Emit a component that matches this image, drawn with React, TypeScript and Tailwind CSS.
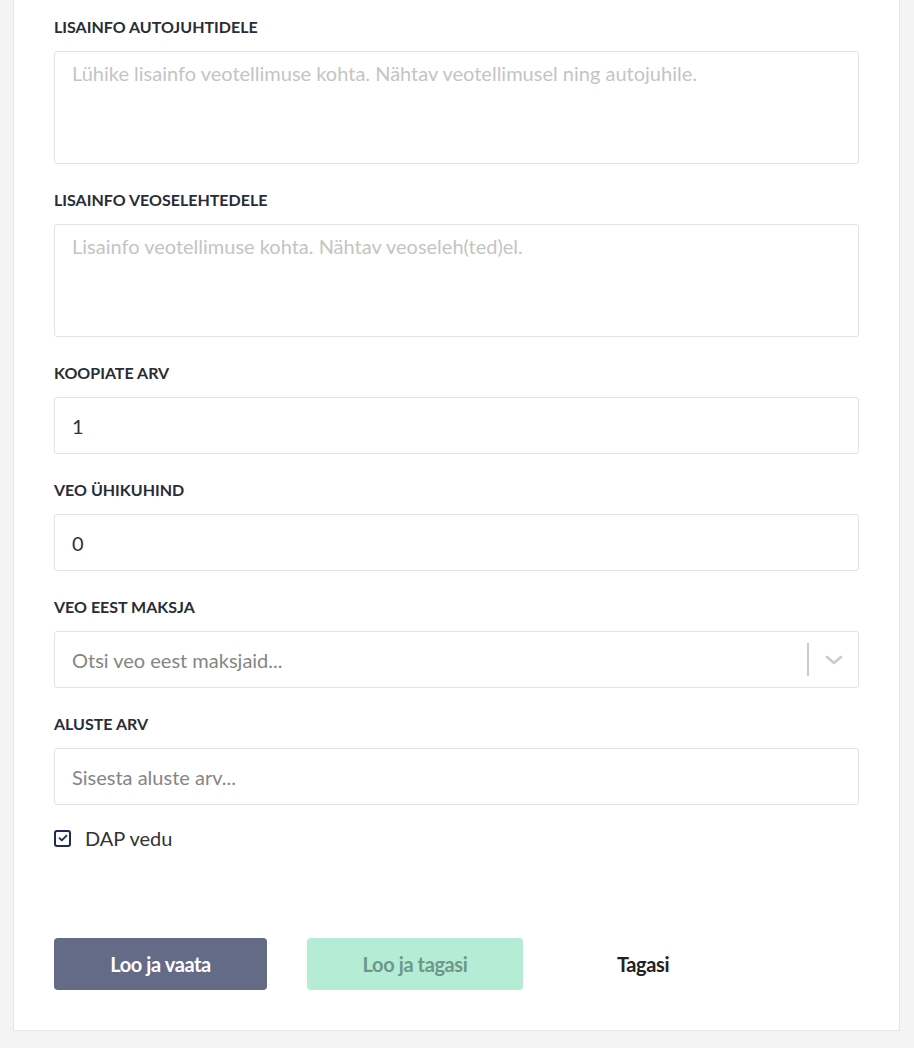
import { useState } from "react";

type Field = {
  label: string;
  kind: "textarea" | "input" | "select";
  placeholder?: string;
  value?: string;
};

const fields: Field[] = [
  {
    label: "Lisainfo autojuhtidele",
    kind: "textarea",
    placeholder: "Lühike lisainfo veotellimuse kohta. Nähtav veotellimusel ning autojuhile.",
  },
  {
    label: "Lisainfo veoselehtedele",
    kind: "textarea",
    placeholder: "Lisainfo veotellimuse kohta. Nähtav veoseleh(ted)el.",
  },
  { label: "Koopiate arv", kind: "input", value: "1" },
  { label: "Veo ühikuhind", kind: "input", value: "0" },
  { label: "Veo eest maksja", kind: "select", placeholder: "Otsi veo eest maksjaid..." },
  { label: "Aluste arv", kind: "input", placeholder: "Sisesta aluste arv..." },
];

const boxBase =
  "w-full rounded-[3px] border border-[#e3e3e3] bg-white px-[17px] text-[20px] text-[#333] outline-none";

export default function App() {
  const [dap, setDap] = useState(true);

  return (
    <div className="min-h-screen bg-[#f4f4f4] pl-[13px] pr-[14px] pb-[17px] font-['Lato','Liberation_Sans',sans-serif]">
      <div className="bg-white border border-t-0 border-[#e6e6e6] px-10 pt-[15px] pb-10">
        {fields.map((f) => (
          <div key={f.label} className="mb-6">
            <label className="block h-6 mb-3 text-[16px] leading-6 font-bold uppercase text-[#2a2c36]">
              {f.label}
            </label>
            {f.kind === "textarea" && (
              <textarea
                placeholder={f.placeholder}
                className={`${boxBase} block h-[113px] resize-none pt-[9px] leading-6 placeholder:text-[#c4c4c4]`}
              />
            )}
            {f.kind === "input" && (
              <input
                type="text"
                defaultValue={f.value}
                placeholder={f.placeholder}
                className={`${boxBase} block h-[57px] placeholder:text-[#858585]`}
              />
            )}
            {f.kind === "select" && (
              <div className={`${boxBase} flex h-[57px] items-center pr-0`}>
                <span className="flex-1 text-[#858585]">{f.placeholder}</span>
                <span className="h-[33px] w-[2px] bg-[#cccccc]" />
                <span className="flex w-[49px] justify-center">
                  <svg width="18" height="10" viewBox="0 0 18 10" fill="none">
                    <path d="M2 2l7 6 7-6" stroke="#cccccc" strokeWidth="2.6" strokeLinecap="round" strokeLinejoin="round" />
                  </svg>
                </span>
              </div>
            )}
          </div>
        ))}

        <label className="-mt-[3px] flex h-6 cursor-pointer items-center gap-[14px] text-[20px] text-[#333]">
          <span
            onClick={() => setDap(!dap)}
            className="flex h-[17px] w-[17px] items-center justify-center rounded-[3px] border-2 border-[#1f2a55]"
          >
            {dap && (
              <svg width="10" height="10" viewBox="0 0 10 10" fill="none">
                <path d="M1.5 5.2l2.3 2.2L8.5 2.6" stroke="#1f2a55" strokeWidth="1.8" strokeLinecap="round" strokeLinejoin="round" />
              </svg>
            )}
          </span>
          DAP vedu
        </label>

        <div className="mt-[88px] flex items-center">
          <button className="h-[52px] w-[213px] rounded-[4px] bg-[#636b87] text-[20px] font-bold tracking-[-0.4px] text-white">
            Loo ja vaata
          </button>
          <button className="ml-10 h-[52px] w-[216px] rounded-[4px] bg-[#b4ecd6] text-[20px] font-bold tracking-[-0.4px] text-[#6e978a]">
            Loo ja tagasi
          </button>
          <button className="ml-10 h-[52px] w-[160px] text-[20px] font-bold tracking-[-0.4px] text-[#222]">
            Tagasi
          </button>
        </div>
      </div>
    </div>
  );
}
